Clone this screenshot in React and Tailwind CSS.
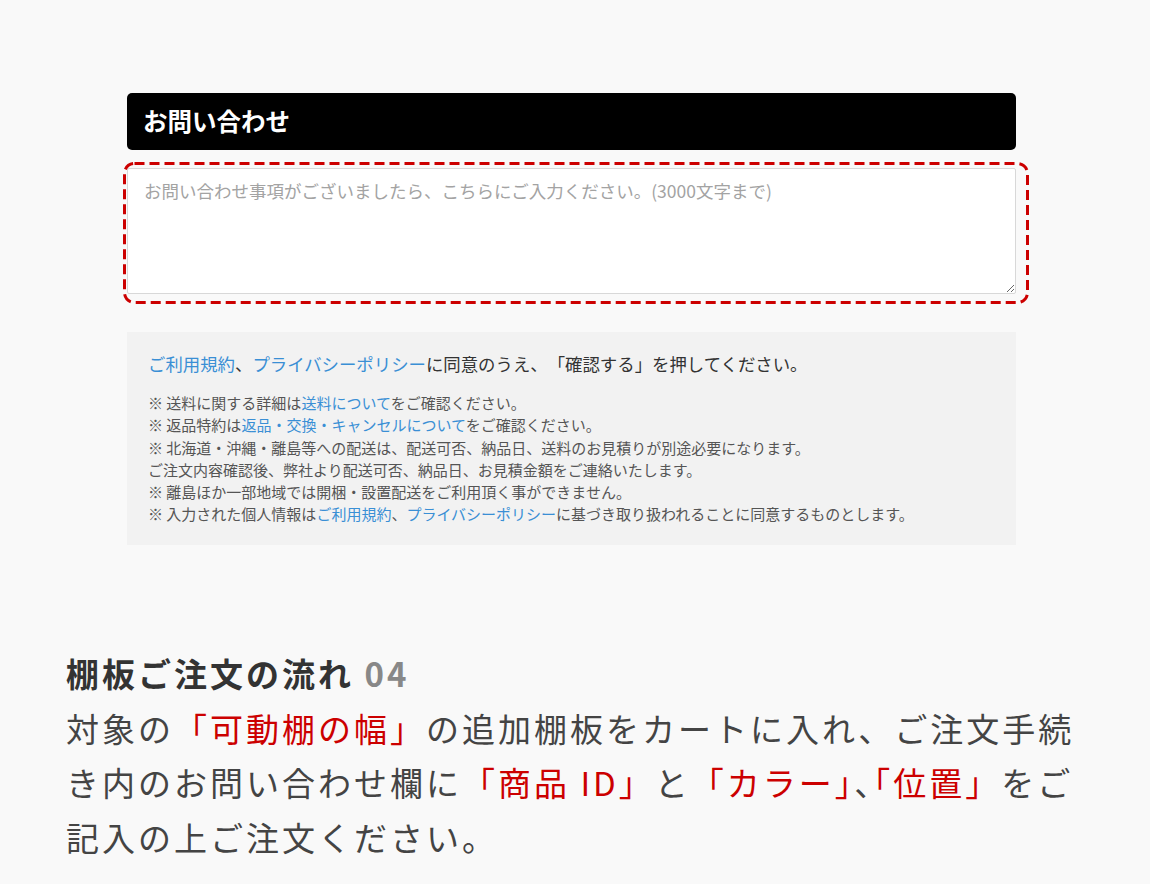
import React from "react";

const L = ({ children }) => <span className="text-[#3a8fd5]">{children}</span>;
const R = ({ children }) => <span className="text-[#cc0000]">{children}</span>;

export default function App() {
  return (
    <div className="min-h-[884px] bg-[#f9f9f9] pt-[93px] font-['Noto_Sans_CJK_JP','Noto_Sans_CJK_SC',sans-serif]">
      <div className="ml-[127px] w-[889px]">
        <div className="flex h-[57px] items-center rounded-[5px] bg-black pl-[16px] text-[24.5px] font-bold text-white">
          お問い合わせ
        </div>
        <div className="relative mt-[18px]">
          <textarea
            className="block h-[126px] w-full rounded-[2px] border border-[#d8d8d8] bg-white px-[16px] pt-[9px] text-[17.5px] leading-[26px] text-[#333] outline-none placeholder:text-[#a3a3a3]"
            placeholder="お問い合わせ事項がございましたら、こちらにご入力ください。(3000文字まで)"
          />
          <svg
            className="pointer-events-none absolute left-[-4px] top-[-6px]"
            width="906"
            height="142"
            viewBox="0 0 906 142"
          >
            <rect
              x="1.5"
              y="1.5"
              width="903"
              height="139"
              rx="10"
              fill="none"
              stroke="#cc0000"
              strokeWidth="3"
              strokeDasharray="10 5"
            />
          </svg>
        </div>
        <div className="mt-[38px] h-[213px] bg-[#f2f2f2] pl-[21px] pt-[18px] [text-spacing-trim:space-all]">
          <p className="text-[17.4px] leading-[28px] text-[#333]">
            <L>ご利用規約</L>、<L>プライバシーポリシー</L>に同意のうえ、「確認する」を押してください。
          </p>
          <div className="mt-[14px] text-[15px] leading-[22.3px] text-[#555]">
            <p>※ 送料に関する詳細は<L>送料について</L>をご確認ください。</p>
            <p>※ 返品特約は<L>返品・交換・キャンセルについて</L>をご確認ください。</p>
            <p>※ 北海道・沖縄・離島等への配送は、配送可否、納品日、送料のお見積りが別途必要になります。</p>
            <p>ご注文内容確認後、弊社より配送可否、納品日、お見積金額をご連絡いたします。</p>
            <p>※ 離島ほか一部地域では開梱・設置配送をご利用頂く事ができません。</p>
            <p>
              ※ 入力された個人情報は<L>ご利用規約</L>、<L>プライバシーポリシー</L>に基づき取り扱われることに同意するものとします。
            </p>
          </div>
        </div>
      </div>
      <div className="ml-[66px] mt-[101px] w-[1060px] whitespace-nowrap text-[33px] leading-[54.5px] tracking-[3px] text-[#444]">
        <p className="font-bold text-[#333]">
          棚板ご注文の流れ <span className="text-[#888]">04</span>
        </p>
        <p>
          対象の<R>「可動棚の幅」</R>の追加棚板をカートに入れ、ご注文手続
          <br />
          き内のお問い合わせ欄に<R>「商品 ID」</R>と<R>「カラー</R>
          <span className="[font-feature-settings:'halt']"><R>」</R>、<R>「</R></span>
          <R>位置」</R>をご
          <br />
          記入の上ご注文ください。
        </p>
      </div>
    </div>
  );
}
